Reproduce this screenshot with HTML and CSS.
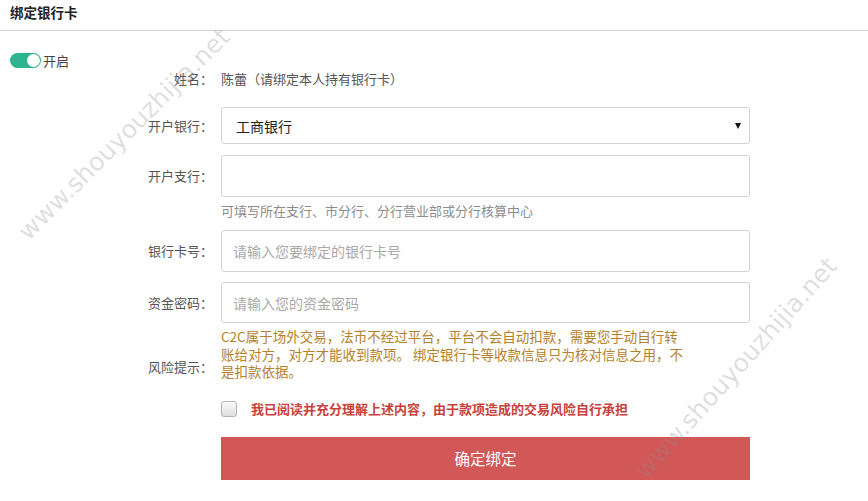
FILE: index.html
```html
<!DOCTYPE html>
<html lang="zh-CN">
<head>
<meta charset="utf-8">
<title>绑定银行卡</title>
<link rel="stylesheet" href="styles.css">
</head>
<body>
<header class="head"><h1 class="title">绑定银行卡</h1></header>
<main class="main">
  <aside class="side">
    <span class="switch"><span class="knob"></span></span>
    <span class="switch-text">开启</span>
  </aside>
  <form class="form">
    <div class="row row-name">
      <span class="label">姓名：</span>
      <span class="value">陈蕾（请绑定本人持有银行卡）</span>
    </div>
    <div class="row row-bank">
      <span class="label">开户银行：</span>
      <div class="field select"><span>工商银行</span><i class="caret"></i></div>
    </div>
    <div class="row row-branch">
      <span class="label">开户支行：</span>
      <input class="field input input-tall" type="text">
    </div>
    <div class="row row-hint">
      <span class="label"></span>
      <span class="hint">可填写所在支行、市分行、分行营业部或分行核算中心</span>
    </div>
    <div class="row row-card">
      <span class="label">银行卡号：</span>
      <input class="field input input-tall" type="text" placeholder="请输入您要绑定的银行卡号">
    </div>
    <div class="row row-pwd">
      <span class="label">资金密码：</span>
      <input class="field input" type="password" placeholder="请输入您的资金密码">
    </div>
    <div class="row row-risk">
      <span class="label label-risk">风险提示：</span>
      <p class="risk">C2C属于场外交易，法币不经过平台，平台不会自动扣款，需要您手动自行转<br>账给对方，对方才能收到款项。 绑定银行卡等收款信息只为核对信息之用，不<br>是扣款依据。</p>
    </div>
    <div class="row row-agree">
      <span class="label"></span>
      <label class="agree"><span class="checkbox"></span><span class="agree-text">我已阅读并充分理解上述内容，由于款项造成的交易风险自行承担</span></label>
    </div>
    <div class="row row-submit">
      <span class="label"></span>
      <button class="submit" type="button">确定绑定</button>
    </div>
  </form>
</main>
<div class="wm wm-1">www.shouyouzhijia.net</div>
<div class="wm wm-2">www.shouyouzhijia.net</div>
</body>
</html>
```

FILE: styles.css
```css
* { box-sizing: border-box; }
html, body {
  margin: 0;
  padding: 0;
  background: #fff;
}
body {
  position: relative;
  width: 868px;
  height: 501px;
  overflow: hidden;
  font-family: "Noto Sans CJK SC", "Noto Sans", sans-serif;
  font-size: 13px;
  color: #555;
}
.head {
  height: 31px;
  padding: 0 10px;
  border-bottom: 1px solid #d4d4d4;
}
.title {
  margin: 0;
  font-size: 13.5px;
  line-height: 24px;
  font-weight: 700;
  color: #222;
}
.main {
  display: flex;
}
.side {
  width: 140px;
  flex: none;
  padding: 22px 0 0 10px;
  display: flex;
  align-items: flex-start;
  gap: 2px;
}
.switch {
  width: 31px;
  height: 15px;
  border-radius: 8px;
  background: #2cb48e;
  display: flex;
  justify-content: flex-end;
  align-items: center;
  padding-right: 1px;
}
.knob {
  width: 13px;
  height: 13px;
  border-radius: 50%;
  background: #fff;
}
.switch-text {
  font-size: 13px;
  line-height: 15px;
  color: #444;
}
.form {
  display: flex;
  flex-direction: column;
  padding-top: 38px;
}
.row {
  display: flex;
  align-items: center;
  gap: 8px;
}
.label {
  width: 73px;
  flex: none;
  text-align: right;
  white-space: nowrap;
  line-height: 20px;
  color: #555;
}
.value { line-height: 20px; color: #555; }
.field {
  width: 529px;
  border: 1px solid #d2d2d2;
  border-radius: 3px;
  background: #fff;
}
.row-bank { margin-top: 18px; }
.select {
  height: 37px;
  display: flex;
  align-items: center;
  justify-content: space-between;
  padding: 0 8px 0 14px;
  font-size: 14px;
  color: #222;
}
.caret {
  width: 0;
  height: 0;
  border-left: 3.5px solid transparent;
  border-right: 3.5px solid transparent;
  border-top: 6px solid #111;
}
.input {
  height: 41px;
  padding: 0 11px;
  font-family: inherit;
  font-size: 14px;
  color: #333;
  outline: none;
}
.input-tall { height: 42px; }
.input::placeholder { color: #a9a9a9; }
.row-branch { margin-top: 11px; }
.row-hint { margin-top: 4px; }
.hint { line-height: 20px; color: #8d8d8d; }
.row-card { margin-top: 9px; }
.row-pwd { margin-top: 10px; }
.row-risk {
  margin-top: 5px;
  align-items: flex-end;
}
.label-risk { margin-bottom: 4px; }
.risk {
  margin: 0;
  font-size: 13.5px;
  line-height: 17.5px;
  color: #b4812c;
  white-space: nowrap;
}
.row-agree { margin-top: 18px; }
.agree {
  display: flex;
  align-items: center;
  gap: 14px;
}
.checkbox {
  width: 16px;
  height: 16px;
  border: 1px solid #b3b3b3;
  border-radius: 3px;
  background: linear-gradient(#fafafa, #dedede);
}
.agree-text {
  font-weight: 700;
  line-height: 20px;
  color: #c8413a;
}
.row-submit { margin-top: 18px; }
.submit {
  width: 529px;
  height: 43px;
  border: 0;
  border-radius: 0;
  background: #d25757;
  color: #fff;
  font-family: inherit;
  font-size: 15.5px;
  cursor: pointer;
}
.wm {
  position: absolute;
  font-family: "DejaVu Sans", sans-serif;
  font-size: 25px;
  color: rgba(140, 140, 140, 0.28);
  white-space: nowrap;
  pointer-events: none;
  transform: translate(-50%, -50%) rotate(-45deg);
}
.wm-1 { left: 124px; top: 134px; }
.wm-2 { left: 736px; top: 368px; transform: translate(-50%, -50%) rotate(-48deg); }
```
